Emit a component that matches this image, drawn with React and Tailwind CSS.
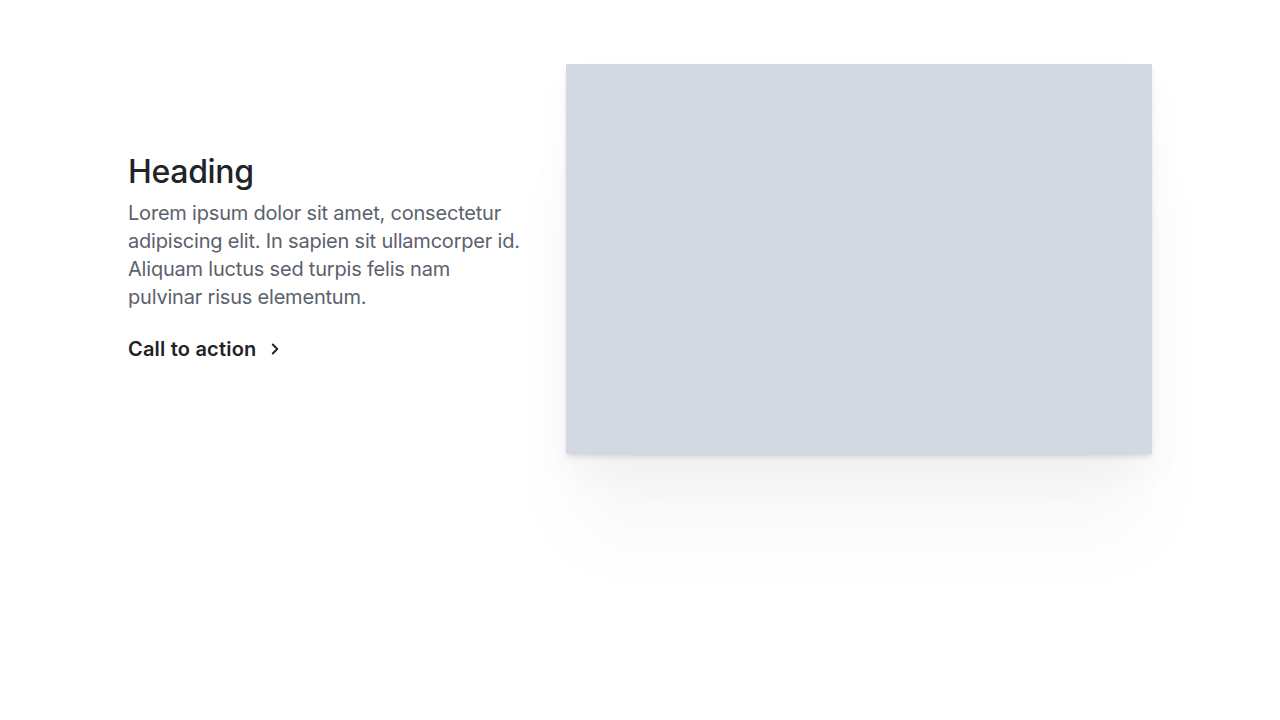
import { ChevronRight } from 'lucide-react';

export default function App() {
  return (
    <div className="min-h-screen bg-white font-['Inter',sans-serif]">
      <section className="mx-auto w-[1024px] pt-16 flex items-center gap-[40px]">
        {/* Copy */}
        <div className="w-[398px] flex-shrink-0 pb-1">
          <h2 className="text-[32px] leading-10 font-medium tracking-[-0.01em] text-[#202328]">Heading</h2>
          <p className="mt-[7px] text-[20px] leading-7 tracking-[-0.01em] text-[#5b616d]">
            Lorem ipsum dolor sit amet, consectetur adipiscing elit. In sapien sit ullamcorper id. Aliquam luctus sed turpis felis nam pulvinar risus elementum.
          </p>
          <a href="#" className="mt-6 inline-flex items-center gap-2.5 text-[20px] leading-7 font-semibold tracking-[0.01em] text-[#202328]">
            Call to action
            <ChevronRight size={18} strokeWidth={2.5} />
          </a>
        </div>

        {/* Image placeholder */}
        <div className="w-[586px] h-[390px] bg-[#d4d8e0] shadow-[0_4px_6px_-1px_rgba(0,0,0,0.1),0_2px_4px_-2px_rgba(0,0,0,0.08),0_90px_80px_-10px_rgba(0,0,0,0.035),0_20px_40px_0px_rgba(0,0,0,0.03)]" />
      </section>
    </div>
  );
}
